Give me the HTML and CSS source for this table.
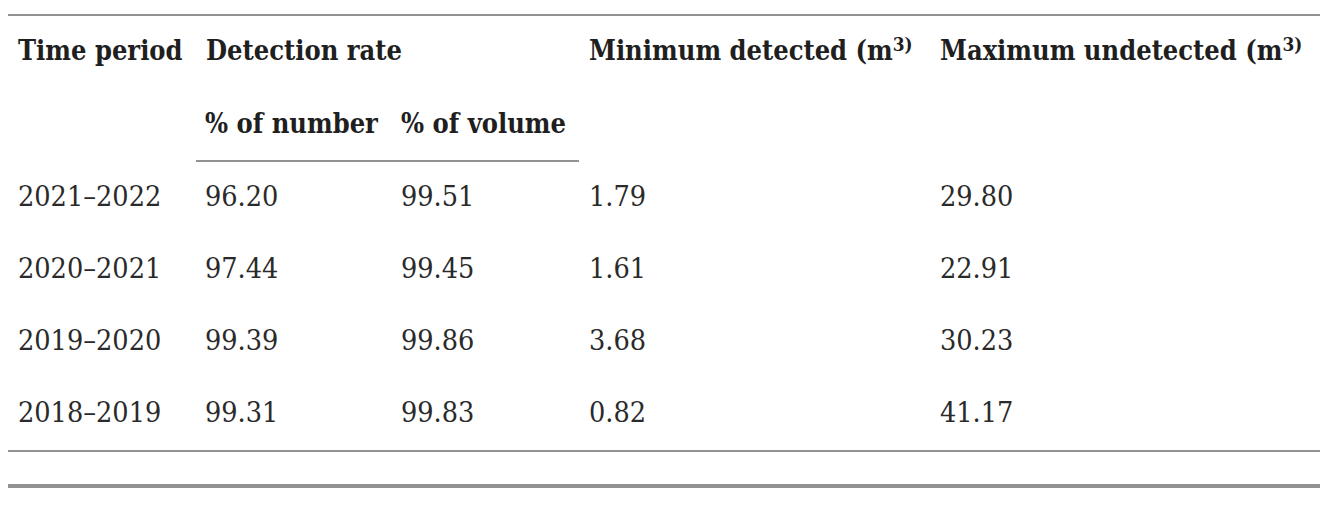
FILE: index.html
```html
<!DOCTYPE html>
<html lang="en">
<head>
<meta charset="utf-8">
<title>Detection rates</title>
<link rel="stylesheet" href="styles.css">
</head>
<body>
<div class="table-wrap">
  <table class="data">
    <colgroup>
      <col class="c1"><col class="c2"><col class="c3"><col class="c4"><col class="c5">
    </colgroup>
    <thead>
      <tr class="h1">
        <th>Time period</th>
        <th colspan="2">Detection rate</th>
        <th>Minimum detected (m<sup>3)</sup></th>
        <th>Maximum undetected (m<sup>3)</sup></th>
      </tr>
      <tr class="h2">
        <th></th>
        <th class="sub">% of number</th>
        <th class="sub">% of volume</th>
        <th></th>
        <th></th>
      </tr>
    </thead>
    <tbody>
      <tr><td>2021–2022</td><td>96.20</td><td>99.51</td><td>1.79</td><td>29.80</td></tr>
      <tr><td>2020–2021</td><td>97.44</td><td>99.45</td><td>1.61</td><td>22.91</td></tr>
      <tr><td>2019–2020</td><td>99.39</td><td>99.86</td><td>3.68</td><td>30.23</td></tr>
      <tr><td>2018–2019</td><td>99.31</td><td>99.83</td><td>0.82</td><td>41.17</td></tr>
    </tbody>
  </table>
  <div class="table-foot"></div>
</div>
</body>
</html>
```
FILE: styles.css
```css
html, body {
  background: #ffffff;
}
body {
  margin: 8px;
  font-family: "DejaVu Serif", "Liberation Serif", serif;
  font-stretch: condensed;
  color: #2a2a2a;
}
.table-wrap {
  width: 1312px;
  padding-top: 6px;
}
.data {
  width: 100%;
  border-collapse: separate;
  border-spacing: 0;
  border-top: 2px solid #929292;
  border-bottom: 2px solid #929292;
  table-layout: fixed;
  font-size: 28.5px;
}
.c1 { width: 188px; }
.c2 { width: 196px; }
.c3 { width: 187px; }
.c4 { width: 351px; }
.c5 { width: 390px; }
th, td {
  padding: 0 10px;
  text-align: left;
  vertical-align: middle;
  white-space: nowrap;
}
th {
  font-weight: bold;
  font-size: 27px;
  color: #1f1f1f;
}
.h1 th { height: 69px; padding-bottom: 3px; }
.h2 th { height: 72px; padding-bottom: 2px; }
.h2 th.sub { border-bottom: 2px solid #929292; height: 70px; padding-left: 9px; }
tbody td { height: 68px; padding-bottom: 4px; }
tbody td:nth-child(2), tbody td:nth-child(3) { padding-left: 9px; }
sup {
  font-size: 0.7em;
  line-height: 0;
  vertical-align: 0.5em;
}
.table-foot {
  height: 32px;
  border-bottom: 4px solid #929292;
}
```
